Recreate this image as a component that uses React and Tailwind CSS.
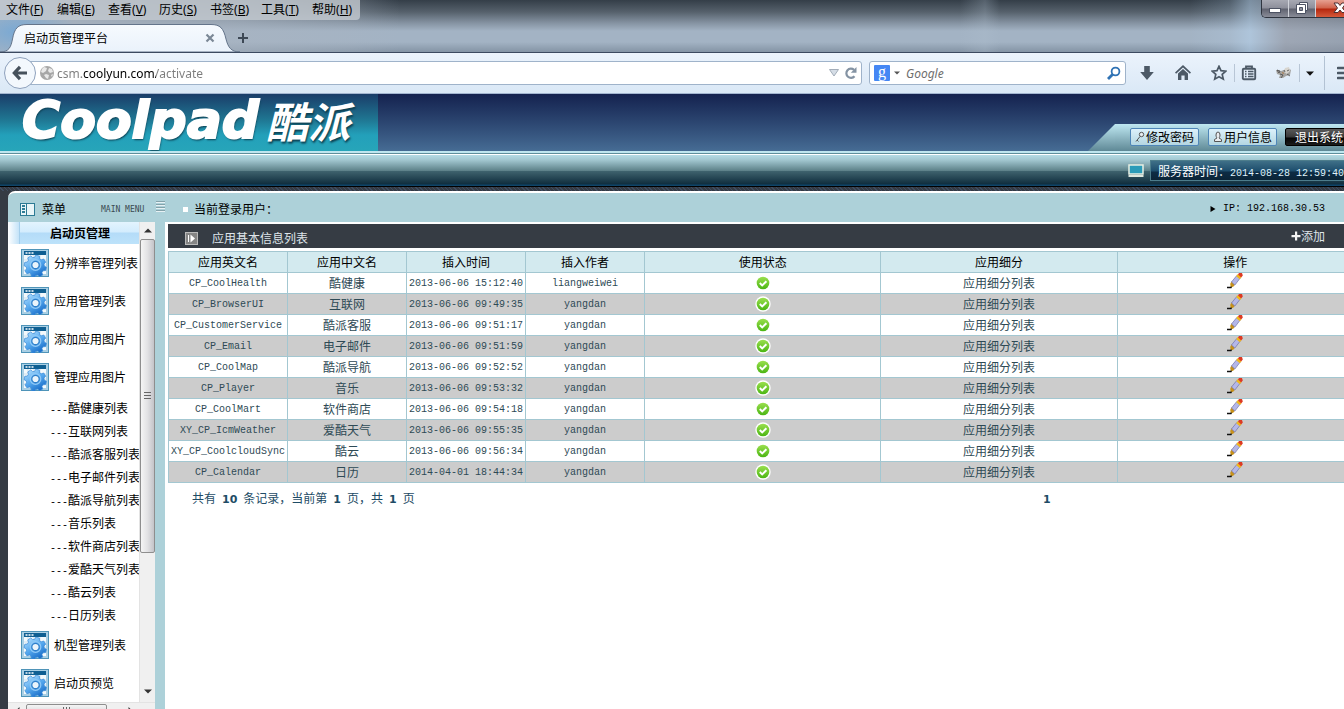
import React from 'react';

const rows = [
  ['CP_CoolHealth', '酷健康', '2013-06-06 15:12:40', 'liangweiwei'],
  ['CP_BrowserUI', '互联网', '2013-06-06 09:49:35', 'yangdan'],
  ['CP_CustomerService', '酷派客服', '2013-06-06 09:51:17', 'yangdan'],
  ['CP_Email', '电子邮件', '2013-06-06 09:51:59', 'yangdan'],
  ['CP_CoolMap', '酷派导航', '2013-06-06 09:52:52', 'yangdan'],
  ['CP_Player', '音乐', '2013-06-06 09:53:32', 'yangdan'],
  ['CP_CoolMart', '软件商店', '2013-06-06 09:54:18', 'yangdan'],
  ['XY_CP_IcmWeather', '爱酷天气', '2013-06-06 09:55:35', 'yangdan'],
  ['XY_CP_CoolcloudSync', '酷云', '2013-06-06 09:56:34', 'yangdan'],
  ['CP_Calendar', '日历', '2014-04-01 18:44:34', 'yangdan'],
];

const headers = ['应用英文名', '应用中文名', '插入时间', '插入作者', '使用状态', '应用细分', '操作'];

const menus = [
  ['文件', 'F'],
  ['编辑', 'E'],
  ['查看', 'V'],
  ['历史', 'S'],
  ['书签', 'B'],
  ['工具', 'T'],
  ['帮助', 'H'],
];

const subItems = ['酷健康列表', '互联网列表', '酷派客服列表', '电子邮件列表', '酷派导航列表', '音乐列表', '软件商店列表', '爱酷天气列表', '酷云列表', '日历列表'];

const mono = "font-['Liberation_Mono','Noto_Sans_CJK_SC',monospace] text-[10px]";

function TitleBar() {
  return (
    <div className="relative h-[53px] overflow-hidden border-b border-[#3c4a60] bg-[linear-gradient(180deg,#343e48_0px,#56616c_12px,#8593a2_23px,#a3b3c4_31px,#a3b3c4_42px,#8494a5_52px)]">
      <div className="absolute inset-0 bg-[linear-gradient(90deg,#a9b4c1_0px,#a9b4c199_240px,#a9b4c144_350px,transparent_400px,transparent_960px,#b0c0cf44_985px,transparent_1000px,transparent_1190px,#b8d4ee33_1230px,#b8d4ee88_1250px,#9a9eaa99_1285px,#8d93a088_100%)]" />
      <div className="absolute inset-0 bg-[radial-gradient(ellipse_60px_30px_at_16px_32px,#6ea6d8cc,transparent)]" />
      <div className="relative flex items-start justify-between">
        <nav className="flex h-5 w-[360px] overflow-hidden rounded-br bg-[#c3c9d0]/80 pl-1.5 font-['Noto_Sans','Noto_Sans_CJK_SC',sans-serif] text-xs leading-5 text-black">
          {menus.map(([label, key]) => (
            <button key={key} className="w-[51px] shrink-0 text-left whitespace-nowrap">
              {label}(<u>{key}</u>)
            </button>
          ))}
        </nav>
        <div className="flex h-[18px] w-[83px] shrink-0 overflow-hidden rounded-bl-[5px] border-b border-l border-[#2f3540]">
          <button aria-label="最小化" className="flex w-[27px] shrink-0 justify-center border-r border-[#d0d3da] bg-[linear-gradient(180deg,#a7a9b3_0px,#8d8f9b_8px,#5f626f_9px,#898c98_17px)]">
            <svg width="14" height="16" viewBox="0 0 14 16"><rect x="1.500" y="8.500" width="11" height="4" fill="#fff" stroke="#4d5364" /></svg>
          </button>
          <button aria-label="还原" className="flex w-[27px] shrink-0 justify-center border-r border-[#d0d3da] bg-[linear-gradient(180deg,#a7a9b3_0px,#8d8f9b_8px,#5f626f_9px,#898c98_17px)]">
            <svg width="14" height="16" viewBox="0 0 14 16"><path d="M4.500 2.500h8v8h-8z" fill="#fff" stroke="#4d5364" /><path d="M1.500 4.500h9v9h-9z" fill="#fff" stroke="#4d5364" /><path d="M4.500 7.500h3v3h-3z" fill="#8d8f9b" stroke="#4d5364" /></svg>
          </button>
          <button aria-label="关闭" className="flex w-[48px] shrink-0 justify-center bg-[linear-gradient(180deg,#e6a091_0px,#d0634c_8px,#b5270e_9px,#d5593a_17px)]">
            <svg width="14" height="16" viewBox="0 0 14 16"><path d="M1 3h4l2 2.500L9 3h4L9.500 8l3.500 4.500H9L7 10l-2 2.500H1L4.500 8z" fill="#fff" stroke="#4d3034" /></svg>
          </button>
        </div>
      </div>
      <div className="absolute bottom-0 left-0 flex h-7 items-center">
        <svg className="absolute bottom-0 left-0" width="240" height="28" viewBox="0 0 240 28">
          <defs><linearGradient id="tab" x1="0" y1="0" x2="0" y2="1"><stop offset="0" stopColor="#f6fafe" /><stop offset="1" stopColor="#eaf2fb" /></linearGradient></defs>
          <path d="M0 28C9 28 11 23 12.500 15C14.500 4 18 .5 27 .5H211C220 .5 223.500 4 226 15C228 23 231 28 240 28Z" fill="url(#tab)" stroke="#64748a" />
        </svg>
        <span className="relative ml-6 w-[180px] font-['Noto_Sans_CJK_SC',sans-serif] text-xs leading-5 text-black">启动页管理平台</span>
        <button aria-label="关闭标签页" className="relative">
          <svg width="12" height="12" viewBox="0 0 12 12"><path d="M2.500 2.500l7 7m0-7l-7 7" stroke="#7b8896" strokeWidth="2.200" /></svg>
        </button>
        <button aria-label="新标签页" className="relative ml-[21px]">
          <svg width="12" height="12" viewBox="0 0 12 12"><path d="M6 1v10M1 6h10" stroke="#3d4855" strokeWidth="2" /></svg>
        </button>
      </div>
    </div>
  );
}

function Separator() {
  return <span className="h-[18px] w-px bg-[#b8c6d6]" />;
}

function NavBar() {
  return (
    <div className="flex h-[41px] items-center overflow-hidden border-b border-[#a3b5d0] bg-linear-to-b from-[#ebf3fc] to-[#dae8f6] pl-1">
      <button aria-label="后退" className="relative z-10 shrink-0">
        <svg width="32" height="32" viewBox="0 0 32 32"><circle cx="16" cy="16" r="15.500" fill="#f3f8fd" stroke="#8ea1bc" /><path d="M10 16h13M16 9.800L10.300 16l5.700 6.200" fill="none" stroke="#46515c" strokeWidth="3.200" /></svg>
      </button>
      <div className="-ml-1.5 flex h-6 min-w-0 flex-1 items-center rounded-r-[3px] border border-[#9fb3ca] bg-white pl-2">
        <svg className="shrink-0" width="16" height="16" viewBox="0 0 16 16"><circle cx="8" cy="8" r="7" fill="#a7a7a7" /><path d="M5 2l3 1-1 3-3 2-2-1 1-3zM10 3l3 1 1 3-3 1-2-2zM7 9l3 1-1 4-2-1-2-3zM12 10l2-1-1 3z" fill="#e9e9e9" /></svg>
        <input
          aria-label="地址"
          defaultValue="csm.coolyun.com/activate"
          className="ml-[2px] min-w-0 flex-1 bg-[linear-gradient(90deg,#7c7c7c_25px,#000_25px,#000_99px,#7c7c7c_99px)] bg-clip-text pt-px font-['Noto_Sans',sans-serif] text-xs text-transparent outline-none"
        />
        <svg className="shrink-0" width="12" height="10" viewBox="0 0 12 10"><path d="M1.500 1.500h9L6 8z" fill="#d5dde6" stroke="#a3adb9" /></svg>
        <button aria-label="刷新" className="mr-[3px] ml-1 shrink-0">
          <svg width="14" height="14" viewBox="0 0 14 14"><path d="M10.500 10.200A4.600 4.600 0 1 1 10 3.800" fill="none" stroke="#8493a3" strokeWidth="2.200" /><path d="M12.500 1v5.800H6.800z" fill="#8493a3" /></svg>
        </button>
      </div>
      <div className="ml-[7px] flex h-6 w-[257px] shrink-0 items-center rounded-[3px] border border-[#9fb3ca] bg-white pl-1">
        <span className="flex h-4 w-4 shrink-0 items-center justify-center rounded-[1px] bg-[#4587f4] pb-[3px] font-['Liberation_Serif',serif] text-[16px] leading-none text-white">g</span>
        <svg className="mx-1 shrink-0" width="6" height="4" viewBox="0 0 6 4"><path d="M0 .5h6L3 3.500z" fill="#555" /></svg>
        <input aria-label="搜索" placeholder="Google" className="ml-[2px] min-w-0 flex-1 pt-px font-['Noto_Sans',sans-serif] text-xs italic outline-none placeholder:text-[#6e6e6e]" />
        <button aria-label="开始搜索" className="mr-1 shrink-0">
          <svg width="15" height="15" viewBox="0 0 15 15" fill="none" stroke="#2f72b4"><circle cx="9.500" cy="5.500" r="3.900" strokeWidth="1.800" /><path d="M6.500 8.500L2 13" strokeWidth="2.800" /></svg>
        </button>
      </div>
      <div className="flex w-[218px] shrink-0 items-center">
        <button aria-label="下载" className="ml-[13px] shrink-0">
          <svg width="16" height="16" viewBox="0 0 16 16"><path d="M5.200 1h5.600v6h4L8 15 1.200 7h4z" fill="#4c5966" /></svg>
        </button>
        <button aria-label="主页" className="ml-5 shrink-0">
          <svg width="16" height="16" viewBox="0 0 16 16" fill="#4c5966"><path d="M8 0l8 7.500-1.100 1.200L8 2.400 1.100 8.700 0 7.500z" /><path d="M8 4l5 4.600V15H9.600v-4.500H6.400V15H3V8.600z" /></svg>
        </button>
        <button aria-label="收藏" className="ml-5 shrink-0">
          <svg width="16" height="16" viewBox="0 0 16 16"><path d="M8 1.300l2 4.400 4.800.5-3.600 3.200 1.100 4.800L8 11.800l-4.300 2.400 1.100-4.800L1.200 6.200 6 5.700z" fill="none" stroke="#4c5966" strokeWidth="1.700" /></svg>
        </button>
        <span className="ml-[7px] flex shrink-0"><Separator /></span>
        <button aria-label="书签列表" className="ml-1.5 shrink-0">
          <svg width="16" height="16" viewBox="0 0 16 16" fill="none" stroke="#4c5966"><rect x="1.800" y="3.800" width="12.400" height="10.400" rx="1" strokeWidth="1.900" /><path d="M5 3V1.500h6V3" strokeWidth="1.800" /><path d="M4 6.500h1.500M7 6.500h5.500M4 9h1.500M7 9h5.500M4 11.500h1.500M7 11.500h5.500" strokeWidth="1.400" /></svg>
        </button>
        <button aria-label="扩展" className="ml-[18px] shrink-0">
          <svg width="18" height="16" viewBox="0 0 18 16"><path d="M1 5l5 1 3-1 4-2 3 2-1 5-4 1-3 2-4 0 1-3-3-1z" fill="#a5a4a1" /><path d="M10 3l4-1 1 4-3 3-3-2z" fill="#d8d5cf" /><path d="M2 5l3 1-1 2zM5 9l3 1-2 3M12 9l3 2M9 5l1 2M12 6l2-1" stroke="#4a4948" strokeWidth=".8" fill="none" /><path d="M7 7l2 1-1 1z" fill="#b06a28" /></svg>
        </button>
        <span className="ml-1.5 flex shrink-0"><Separator /></span>
        <button aria-label="更多" className="ml-1.5 shrink-0">
          <svg width="8" height="5" viewBox="0 0 8 5"><path d="M0 .5h8L4 4.800z" fill="#111" /></svg>
        </button>
        <span className="ml-[10px] h-[34px] w-px shrink-0 bg-[#b3c2d3]" />
        <button aria-label="打开菜单" className="ml-[12px] shrink-0">
          <svg width="16" height="14" viewBox="0 0 16 14"><path d="M1 2h14M1 7h14M1 12h14" stroke="#4c5966" strokeWidth="2.600" strokeLinecap="round" /></svg>
        </button>
      </div>
    </div>
  );
}

function Banner() {
  const light = "flex h-[18px] shrink-0 items-center gap-px rounded-[2px] border border-[#4f86b8] bg-linear-to-b from-[#dcf1fb] to-[#b4d6e1] px-1 text-xs leading-4 text-black";
  return (
    <header>
      <div className="flex h-[57px] overflow-hidden bg-linear-to-b from-[#15224f] to-[#466c94]">
        <h1 className="flex w-[378px] shrink-0 items-start bg-[linear-gradient(180deg,#1a3d69_0%,#1f7692_45%,#23a0ba_72%,#27a5b9_100%)] pl-[22px] whitespace-nowrap text-white italic [text-shadow:1px_2px_2px_#0c4052]">
          <span className="w-[244px] font-['DejaVu_Sans',sans-serif] text-[52px] leading-[52px] font-bold [-webkit-text-stroke:2px_white]">Coolpad</span>
          <span className="font-['Noto_Sans_CJK_SC',sans-serif] text-[42px] leading-[52px] font-bold">酷派</span>
        </h1>
        <div className="ml-auto flex w-64 shrink-0 items-end overflow-hidden">
          <svg className="shrink-0" width="27" height="27" viewBox="0 0 27 27">
            <defs><linearGradient id="wing" x1="0" y1="0" x2="0" y2="1"><stop offset="0" stopColor="#bfe8f2" /><stop offset="1" stopColor="#5f8996" /></linearGradient></defs>
            <path d="M27 0v27H0z" fill="url(#wing)" />
          </svg>
          <div className="flex h-[27px] w-60 shrink-0 items-center gap-2 bg-linear-to-b from-[#bfe8f2] to-[#5f8996] pb-px pl-[15px]">
            <button className={light}>
              <svg width="10" height="12" viewBox="0 0 10 12" fill="none" stroke="#555"><circle cx="6.500" cy="3.500" r="2.200" fill="#e7edf0" /><path d="M5 5.500L1 10.500M2 9l1.500 1.500" /></svg>
              修改密码
            </button>
            <button className={`${light} ml-px`}>
              <svg width="10" height="12" viewBox="0 0 10 12" fill="#e9edf0" stroke="#555"><path d="M3 4a2 3 0 1 1 4 0c0 1.500-.5 2.200-1 3l2.500 1.500v2h-7v-2L4 7C3.500 6.200 3 5.500 3 4z" /></svg>
              用户信息
            </button>
            <button className="h-[18px] w-[68px] shrink-0 rounded-[2px] border border-black bg-[linear-gradient(180deg,#5a5a5a_0px,#393939_8px,#050505_9px,#1c1c1c_16px)] text-xs leading-4 whitespace-nowrap text-white">退出系统</button>
          </div>
        </div>
      </div>
      <div className="h-1 border-b border-white bg-[linear-gradient(180deg,#bfe6ef_2px,#5f8f9b_2px)]" />
      <div className="flex h-[31px] items-center justify-end overflow-hidden bg-[linear-gradient(180deg,#b5dce5_0px,#a2c7d0_5px,#5b7f87_16px,#3f636e_16px,#102e3e_29px,#0e4468_30px)]">
        <svg className="mr-1.5 shrink-0" width="16" height="14" viewBox="0 0 16 14"><rect x="1" y="1" width="14" height="9" fill="#2b9bb8" stroke="#e8f0e4" strokeWidth="1.500" /><path d="M.5 12h15" stroke="#dfe8df" strokeWidth="2" /></svg>
        <div className="h-[21px] shrink-0 border border-r-0 border-[#4d7d8c] bg-[linear-gradient(180deg,#3f7088_0px,#1d4d6c_10px,#0d2c45_11px,#0b2437_19px)] pl-[7px] text-xs leading-[19px] whitespace-nowrap text-white">
          服务器时间：<span className={`${mono} text-[#dff1fa]`}>2014-08-28 12:59:40</span>
        </div>
      </div>
      <div className="h-[5px] border-t border-black bg-[repeating-linear-gradient(45deg,#343a43_0px,#343a43_2px,#3e4c60_2px,#3e4c60_3px)]" />
    </header>
  );
}

function GearIcon() {
  return (
    <svg className="shrink-0" width="28" height="28" viewBox="0 0 28 28">
      <defs><linearGradient id="gear" gradientUnits="userSpaceOnUse" x1="-8" y1="-8" x2="8" y2="9"><stop offset="0" stopColor="#a6d8fc" /><stop offset=".5" stopColor="#55a8ee" /><stop offset="1" stopColor="#1b6fc9" /></linearGradient></defs>
      <rect x=".5" y=".5" width="27" height="27" fill="#a9cfe4" stroke="#4f94b8" />
      <rect x="3" y="2" width="22" height="23" fill="#f3f9fc" />
      <path d="M7 6v19M13 6v19M19 6v19M3 11h22M3 16h22M3 21h22" stroke="#cfe1ed" />
      <rect x="3" y="2" width="22" height="4" fill="#0f5f92" />
      <path d="M4.500 3.200h2v1.600h-2zM7.500 3.200h2v1.600h-2zM10.500 3.200h2v1.600h-2z" fill="#fff" />
      <g transform="translate(14.500 16)">
        <path
          d="M-2 -10h4l.7 2.600 2 .9 2.400-1.400 2.700 2.800-1.400 2.300.8 2 2.400.7v3.600l-2.500.7-.9 2 1.300 2.400-2.700 2.500-2.300-1.400-2.100.9-.6 2.200h-3.600l-.7-2.400-2-.9-2.400 1.300-2.600-2.600 1.300-2.300-.8-2-2.500-.7v-3.700l2.500-.7.9-2-1.300-2.300 2.600-2.700 2.400 1.300 2-.8z"
          transform="rotate(12) scale(.96)"
          fill="url(#gear)"
          stroke="#3c8dd9"
          strokeWidth=".7"
        />
        <circle r="5.300" fill="none" stroke="#8fc9f7" strokeWidth="1.200" />
        <circle r="3.700" fill="#eaf4fb" stroke="#2f80cb" strokeWidth="1.200" />
      </g>
    </svg>
  );
}

function MenuItem({ children }) {
  return (
    <li>
      <a href="#" className="flex h-[38px] items-center gap-[5px] pl-[13px] text-xs whitespace-nowrap text-black">
        <GearIcon />
        {children}
      </a>
    </li>
  );
}

function ScrollBars({ children }) {
  return (
    <div className="w-[147px] bg-white">
      <div className="flex">
        <div className="w-[131px] overflow-hidden">{children}</div>
        <div className="flex w-4 flex-col items-center border-l border-[#e3e3e3] bg-[#f0f0f0]">
          <button aria-label="向上滚动" className="flex h-[17px] items-center"><svg width="8" height="5" viewBox="0 0 8 5"><path d="M0 4.500L4 .5l4 4z" fill="#333" /></svg></button>
          <div className="flex h-[314px] w-full items-center justify-center rounded-[2px] border border-[#8e8e8e] bg-linear-to-r from-[#f5f5f5] via-[#e2e2e4] to-[#c4c4c9]">
            <svg width="8" height="8" viewBox="0 0 8 8"><path d="M0 .5h7M0 3.500h7M0 6.500h7" stroke="#666" /></svg>
          </div>
          <button aria-label="向下滚动" className="mt-auto mb-[7px] flex h-2 items-center"><svg width="8" height="5" viewBox="0 0 8 5"><path d="M0 .5h8l-4 4z" fill="#333" /></svg></button>
        </div>
      </div>
      <div className="flex h-[17px] items-center border-t border-[#e3e3e3] bg-[#f0f0f0] pr-4">
        <button aria-label="向左滚动" className="flex w-[18px] justify-center"><svg width="5" height="8" viewBox="0 0 5 8"><path d="M4.500 0v8l-4-4z" fill="#333" /></svg></button>
        <div className="flex h-[15px] w-[81px] items-center justify-center rounded-[2px] border border-[#8e8e8e] bg-linear-to-b from-[#f5f5f5] to-[#c9c9cd]">
          <svg width="8" height="8" viewBox="0 0 8 8"><path d="M.5 0v7M3.500 0v7M6.500 0v7" stroke="#666" /></svg>
        </div>
        <button aria-label="向右滚动" className="ml-auto flex w-[18px] justify-center"><svg width="5" height="8" viewBox="0 0 5 8"><path d="M.5 0v8l4-4z" fill="#333" /></svg></button>
      </div>
    </div>
  );
}

function Sidebar() {
  return (
    <aside className="w-[157px] shrink-0">
      <ScrollBars>
        <h2 className="flex h-[22px] text-xs leading-[22px] font-bold text-black">
          <span className="w-[11px] shrink-0 bg-linear-to-r from-white to-[#c4e3f8]" />
          <span className="flex-1 border-l border-[#a5cfec] bg-[linear-gradient(180deg,#e3f4fe_0px,#d3ecfd_10px,#b4dcf8_11px,#bde2fa_22px)] pl-[30px] whitespace-nowrap">启动页管理</span>
        </h2>
        <ul>
          <MenuItem>分辨率管理列表</MenuItem>
          <MenuItem>应用管理列表</MenuItem>
          <MenuItem>添加应用图片</MenuItem>
          <MenuItem>管理应用图片</MenuItem>
          {subItems.map((s) => (
            <li key={s}>
              <a href="#" className="block h-[23px] pl-[42px] text-xs leading-[23px] whitespace-nowrap text-black">
                <span className={mono}>---</span>{s}
              </a>
            </li>
          ))}
          <MenuItem>机型管理列表</MenuItem>
          <MenuItem>启动页预览</MenuItem>
        </ul>
      </ScrollBars>
    </aside>
  );
}

function StatusIcon() {
  return (
    <svg className="mx-auto" width="16" height="16" viewBox="0 0 16 16" role="img" aria-label="启用">
      <defs><linearGradient id="ok" x1="0" y1="0" x2="0" y2="1"><stop offset="0" stopColor="#9be04f" /><stop offset="1" stopColor="#4ab512" /></linearGradient></defs>
      <circle cx="8" cy="8" r="7.700" fill="#fff" />
      <circle cx="8" cy="8" r="6.300" fill="url(#ok)" />
      <path d="M4.800 8l2.400 2.400 4.200-4.200" fill="none" stroke="#fff" strokeWidth="2" />
    </svg>
  );
}

function PencilIcon() {
  return (
    <svg width="16" height="16" viewBox="0 0 16 16">
      <path d="M0 14.500h4L5 12" fill="none" stroke="#111" strokeWidth="1.400" />
      <path d="M3.200 11L4.500 8.500 8 11.500 6 14l-2.300-.5z" fill="#c8921a" />
      <path d="M4.500 9L9.800 2.500l3.400 2.600-5.400 7z" fill="#b4b7e8" stroke="#6e71a8" strokeWidth=".7" />
      <path d="M9.200 3.200L10.800 1l3.700 3-1.700 2.200z" fill="#f0b81c" />
      <path d="M11 1.500L12 0h3l.8 2.500-1.600 2z" fill="#dc3a24" />
    </svg>
  );
}

function AppTable() {
  const cell = 'h-[21px] border border-[#a3c7d1] p-0 overflow-hidden whitespace-nowrap';
  const latin = `${cell} ${mono} pt-[2px] leading-[18px]`;
  return (
    <table className="mt-[3px] w-full table-fixed border-collapse text-center text-xs leading-5 text-[#2e4a55]">
      <colgroup>
        <col className="w-[119px]" /><col className="w-[119px]" /><col className="w-[119px]" /><col className="w-[119px]" />
        <col /><col /><col />
      </colgroup>
      <thead>
        <tr className="bg-[#d3eaef] text-black">
          {headers.map((h) => <th key={h} scope="col" className={`${cell} font-normal`}>{h}</th>)}
        </tr>
      </thead>
      <tbody>
        {rows.map(([en, cn, time, author]) => (
          <tr key={en} className="bg-white even:bg-[#cccccc]">
            <td className={latin}>{en}</td>
            <td className={cell}>{cn}</td>
            <td className={latin}>{time}</td>
            <td className={latin}>{author}</td>
            <td className={cell}><StatusIcon /></td>
            <td className={cell}><a href="#">应用细分列表</a></td>
            <td className={`${cell} align-top`}><button aria-label="编辑" className="mx-auto block"><PencilIcon /></button></td>
          </tr>
        ))}
      </tbody>
    </table>
  );
}

function Pager() {
  const num = "font-['DejaVu_Sans',sans-serif] text-[11px] font-bold";
  return (
    <footer className="mt-[5px] flex items-baseline text-xs leading-5 text-[#1e4c66]">
      <p className="flex w-[875px] items-baseline gap-[6px] pl-6 whitespace-nowrap">
        <span>共有</span><b className={num}>10</b><span>条记录，当前第</span><b className={num}>1</b><span>页，共</span><b className={num}>1</b><span>页</span>
      </p>
      <a href="#" className={num}>1</a>
    </footer>
  );
}

export default function App() {
  return (
    <div className="flex h-screen flex-col overflow-hidden bg-[#353b44] font-['Noto_Sans_CJK_SC',sans-serif]">
      <TitleBar />
      <NavBar />
      <Banner />
      <div className="ml-2 flex min-h-0 flex-1 flex-col rounded-tl-[7px] border-t-2 border-white bg-[#add1d9]">
        <div className="flex h-[29px] shrink-0 items-center pt-[3px] text-xs text-black">
          <svg className="ml-3 shrink-0" width="15" height="13" viewBox="0 0 15 13"><rect x=".5" y=".5" width="14" height="12" fill="#e9f5f8" stroke="#2c7a94" /><path d="M6.500 0v13" stroke="#2c7a94" /><path d="M2 3h3M2 6h3M2 9h3" stroke="#2f7d96" strokeWidth="2" /></svg>
          <span className="ml-[7px] w-[59px]">菜单</span>
          <span className="w-[55px] pt-[2px] font-['DejaVu_Sans_Mono',monospace] text-[8px] whitespace-nowrap text-[#3a4a50]">MAIN MENU</span>
          <svg className="mb-1 shrink-0" width="10" height="12" viewBox="0 0 10 12"><path d="M0 1.500h9M0 4.500h9M0 7.500h9M0 10.500h9" stroke="#e6f1f4" /><path d="M0 .5h9M0 3.500h9M0 6.500h9M0 9.500h9" stroke="#84a3ab" /></svg>
          <span className="ml-[17px] h-[5px] w-[5px] bg-white" />
          <span className="ml-1.5">当前登录用户：</span>
          <svg className="ml-auto" width="6" height="8" viewBox="0 0 6 8"><path d="M.5 1L5.500 4l-5 3z" fill="#000" /></svg>
          <span className={`mr-[19px] ml-[7px] ${mono}`}>IP: 192.168.30.53</span>
        </div>
        <div className="flex min-h-0 flex-1">
          <Sidebar />
          <main className="min-w-0 flex-1 overflow-hidden bg-white pt-[2px] pl-[3px]">
            <div className="w-[calc(100%+10px)]">
              <div className="flex h-6 items-center bg-[#363c44] text-xs text-[#dfe5ea]">
                <svg className="mt-1 ml-[17px] shrink-0" width="13" height="13" viewBox="0 0 13 13"><rect x=".5" y=".5" width="12" height="12" fill="#858585" stroke="#b9b9b9" /><path d="M3.500 3v7" stroke="#fff" /><path d="M5.500 2.500L10 6.500l-4.500 4z" fill="#fff" /></svg>
                <h2 className="ml-[14px] pt-1">应用基本信息列表</h2>
                <button className="mr-[29px] ml-auto flex items-center">
                  <svg width="10" height="10" viewBox="0 0 10 10"><path d="M4 .5h2.200V4H9.500v2.200H6.200V9.500H4V6.200H.5V4H4z" fill="#f4f4f4" /></svg>
                  添加
                </button>
              </div>
              <AppTable />
              <Pager />
            </div>
          </main>
        </div>
      </div>
    </div>
  );
}
